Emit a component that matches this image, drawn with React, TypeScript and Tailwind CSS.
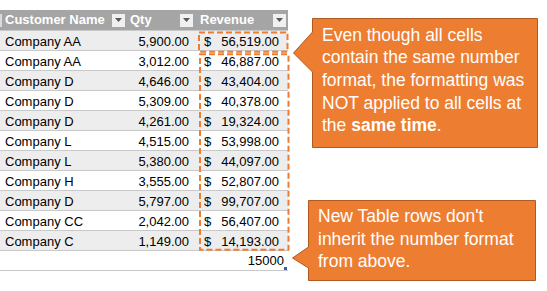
import React from "react";

const rows: [string, string, string][] = [
  ["Company AA", "5,900.00", "56,519.00"],
  ["Company AA", "3,012.00", "46,887.00"],
  ["Company D", "4,646.00", "43,404.00"],
  ["Company D", "5,309.00", "40,378.00"],
  ["Company D", "4,261.00", "19,324.00"],
  ["Company L", "4,515.00", "53,998.00"],
  ["Company L", "5,380.00", "44,097.00"],
  ["Company H", "3,555.00", "52,807.00"],
  ["Company D", "5,797.00", "99,707.00"],
  ["Company CC", "2,042.00", "56,407.00"],
  ["Company C", "1,149.00", "14,193.00"],
];

function Dropdown() {
  return (
    <div className="w-[13px] h-[13px] bg-[#F0F0F0] flex items-center justify-center shrink-0">
      <svg width="7" height="4" viewBox="0 0 7 4">
        <path d="M0 0 H7 L3.5 4 Z" fill="#595959" />
      </svg>
    </div>
  );
}

export default function App() {
  return (
    <div
      className="relative w-[547px] h-[291px] bg-white overflow-hidden pt-[10px]"
      style={{ fontFamily: '"Liberation Sans", Arial, sans-serif' }}
    >
      <div className="w-[288px] text-[13px] text-black">
        {/* header */}
        <div className="flex h-[20px] bg-[#A5A5A5] text-white font-bold leading-[20px]">
          <div className="w-[128px] flex items-center pr-[3px]">
            <div className="w-[2px] h-[13px] bg-[#DADADA]" />
            <span className="ml-[3px] flex-1">Customer Name</span>
            <Dropdown />
          </div>
          <div className="w-[68px] flex items-center pl-[2px] pr-[3px]">
            <span className="flex-1">Qty</span>
            <Dropdown />
          </div>
          <div className="w-[92px] flex items-center pl-[4px] pr-[2px]">
            <span className="flex-1">Revenue</span>
            <Dropdown />
          </div>
        </div>
        {rows.map((r, i) => (
          <div
            key={i}
            className={`flex h-[20px] border-t border-[#C9C9C9] ${
              i % 2 === 0 ? "bg-[#EDEDED]" : "bg-white"
            }`}
          >
            <div className="w-[128px] pl-[5px] pt-[3px] leading-[16px] whitespace-nowrap">{r[0]}</div>
            <div className="w-[68px] pr-[7px] pt-[3px] leading-[16px] text-right">{r[1]}</div>
            <div className="w-[92px] pl-[8px] pr-[9px] pt-[3px] leading-[16px] flex justify-between">
              <span>$</span>
              <span>{r[2]}</span>
            </div>
          </div>
        ))}
        {/* total row */}
        <div className="relative flex h-[21px] border-t border-b border-[#C9C9C9] bg-white">
          <div className="w-[128px]" />
          <div className="w-[68px]" />
          <div className="w-[92px] pr-[4px] pt-[2px] leading-[16px] text-right">15000</div>
          <div className="absolute right-[1px] bottom-[0px] w-[3px] h-[3px] bg-[#3A5DAE]" />
        </div>
      </div>

      {/* dashed outlines */}
      <svg
        className="absolute left-0 top-0 pointer-events-none"
        width="547"
        height="291"
        viewBox="0 0 547 291"
      >
        <rect x="199" y="32.5" width="88.5" height="19.2" fill="none" stroke="#ED7D31" strokeWidth="2" strokeDasharray="6 3" />
        <rect x="200" y="54.3" width="88.5" height="195.4" fill="none" stroke="#ED7D31" strokeWidth="2" strokeDasharray="6 3" />
      </svg>

      {/* callout 1 */}
      <div className="absolute left-[293px] top-[18px] w-[245px] h-[130px]">
        <svg className="absolute inset-0" width="245" height="130" viewBox="0 0 245 130">
          <path
            d="M19.5 0.5 H244.5 V129.5 H19.5 V54 L0.5 35 L19.5 14 Z"
            fill="#ED7D31"
            stroke="#AE5A21"
            strokeWidth="1"
          />
        </svg>
        <div className="relative pl-[29px] pt-[5.5px] text-white text-[17.5px] leading-[22.7px] whitespace-nowrap">
          Even though all cells
          <br />
          contain the same number
          <br />
          format, the formatting was
          <br />
          NOT applied to all cells at
          <br />
          the <span className="font-bold">same time</span>.
        </div>
      </div>

      {/* callout 2 */}
      <div className="absolute left-[292px] top-[200px] w-[244px] h-[81px]">
        <svg className="absolute inset-0" width="244" height="81" viewBox="0 0 244 81">
          <path
            d="M16.5 0.5 H243.5 V80.5 H16.5 V68 L0.5 58 L16.5 47 Z"
            fill="#ED7D31"
            stroke="#AE5A21"
            strokeWidth="1"
          />
        </svg>
        <div className="relative pl-[26px] pt-[5px] text-white text-[17.5px] leading-[22.7px] whitespace-nowrap">
          New Table rows don't
          <br />
          inherit the number format
          <br />
          from above.
        </div>
      </div>
    </div>
  );
}
